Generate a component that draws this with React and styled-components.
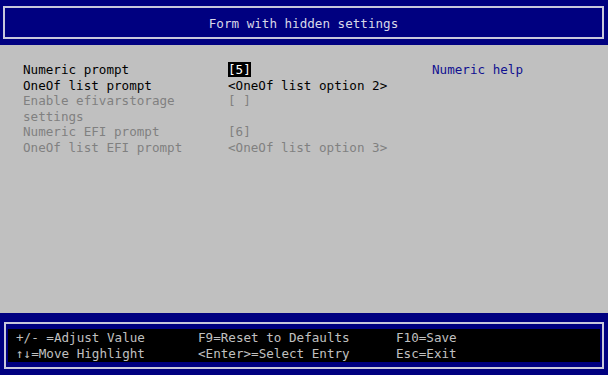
import React from 'react'
import styled, {createGlobalStyle} from 'styled-components'

const navy = '#000080'
const gray = '#c0c0c0'
const dim = '#808080'
const frame = '#c8c8dc'

const GlobalStyle = createGlobalStyle`
  html, body {
    margin: 0;
    padding: 0;
    background: ${navy};
  }
  * {
    box-sizing: border-box;
  }
`
const Screen = styled.div`
  width: 608px;
  height: 375px;
  display: flex;
  flex-direction: column;
  font-family: "DejaVu Sans Mono", "Liberation Mono", monospace;
  font-size: 12.6px;
  line-height: 15.6px;
  overflow: hidden;
`
const Header = styled.div`
  height: 45px;
  background-color: ${navy};
  padding: 6px 4px 6px 3px;
`
const Frame = styled.div`
  height: 100%;
  border: 2px solid ${frame};
  display: flex;
  align-items: center;
  justify-content: center;
  padding: ${props => props.inner ? '5px 2px' : '3px 0 0 0'};
`
const Title = styled.div`
  color: #d8d8e8;
`
const Body = styled.div`
  flex: 1;
  background-color: ${gray};
  padding: 17px 0 0 23px;
  display: flex;
  flex-direction: column;
`
const Row = styled.div`
  display: flex;
  align-items: flex-start;
  color: ${props => props.disabled ? dim : '#000'};
`
const Label = styled.div`
  width: 205px;
  padding-right: 20px;
`
const Value = styled.div`
  width: 204px;
`
const Help = styled.div`
  color: #101090;
`
const Selected = styled.span`
  background-color: #000;
  color: #fff;
`
const Footer = styled.div`
  height: 62px;
  background-color: ${navy};
  padding: 9px 4px 6px 4px;
`
const KeyPanel = styled.div`
  width: 100%;
  height: 100%;
  background-color: #000;
  color: ${gray};
  padding: 0 8px;
  display: grid;
  grid-template-columns: 182px 198px 1fr;
  align-content: center;
`

const rows = [
  {label: 'Numeric prompt', value: <Selected>[5]</Selected>, help: 'Numeric help'},
  {label: 'OneOf list prompt', value: '<OneOf list option 2>'},
  {label: 'Enable efivarstorage settings', value: '[ ]', disabled: true},
  {label: 'Numeric EFI prompt', value: '[6]', disabled: true},
  {label: 'OneOf list EFI prompt', value: '<OneOf list option 3>', disabled: true},
]

const keys = [
  '+/- =Adjust Value', 'F9=Reset to Defaults', 'F10=Save',
  '↑↓=Move Highlight', '<Enter>=Select Entry', 'Esc=Exit',
]

const App = () => {
  return (
    <Screen>
      <GlobalStyle/>
      <Header>
        <Frame>
          <Title>Form with hidden settings</Title>
        </Frame>
      </Header>
      <Body>
        {rows.map(r => (
          <Row key={r.label} disabled={r.disabled}>
            <Label>{r.label}</Label>
            <Value>{r.value}</Value>
            {r.help && <Help>{r.help}</Help>}
          </Row>
        ))}
      </Body>
      <Footer>
        <Frame inner>
          <KeyPanel>
            {keys.map(k => <div key={k}>{k}</div>)}
          </KeyPanel>
        </Frame>
      </Footer>
    </Screen>
  )
}

export default App
